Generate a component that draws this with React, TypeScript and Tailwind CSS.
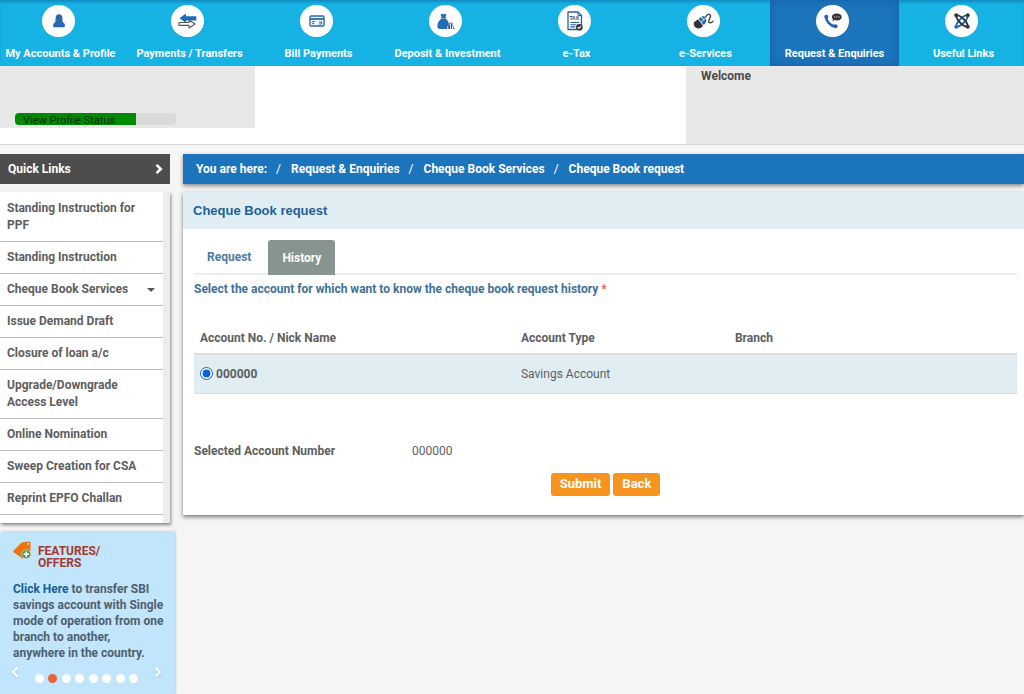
import { useState } from 'react';
import type { ReactNode } from 'react';

interface NavItem {
  label: string;
  icon: ReactNode;
  active?: boolean;
}

function UserIcon() {
  return (
    <svg viewBox="0 0 12 14" className="w-3 h-3.5" fill="#2a67b2">
      <path d="M6 .3c2.200 0 3.400 1.500 3.400 3.600 0 2 .2 3.600.6 4.600l1.100.8c.5.400.7.9.7 1.700v1.400c0 .6-.4.9-1 .9H1.200c-.6 0-1-.3-1-.9V11c0-.8.2-1.300.7-1.700L2 8.500c.4-1 .6-2.600.6-4.600C2.600 1.800 3.800.3 6 .3z" />
    </svg>
  );
}

function TransferIcon() {
  return (
    <svg viewBox="0 0 19 16" className="w-[19px] h-4">
      <path d="M2 9.500h9V7l6 4-6 4v-2.600H1v-2.900z" fill="#fff" stroke="#555" strokeWidth="1.100" strokeLinejoin="round" />
      <path d="M1.500 5.300 8 .4v2.900h10.300v4.300H8v2.500z" fill="#1f6bb5" />
    </svg>
  );
}

function CardIcon() {
  return (
    <svg viewBox="0 0 16 12" className="w-4 h-3" fill="none">
      <rect x="1" y="1" width="14" height="10" rx="1" fill="#eef5fb" stroke="#2d6aa8" strokeWidth="1.400" />
      <path d="M1 4h14" stroke="#2d6aa8" strokeWidth="1.800" />
      <path d="M3 6.600h3M3 8.600h2M10 7h2.500v2H10" stroke="#2d6aa8" />
    </svg>
  );
}

function MoneyBagIcon() {
  return (
    <svg viewBox="0 0 18 17" className="w-[18px] h-[17px]">
      <path d="M3.500 1.500 5 .8 6.300 1.600 7.800.7l1.600.9-1 2.400H4.600z" fill="#1f6bb5" />
      <path d="M3.800 4.700h5.300" stroke="#2b4a6b" />
      <path d="M4.600 5.500h4c1.900 1.500 3.300 3.600 3.300 6.100-.9.500-1.500 1.500-1.500 2.600v1.700H3C1.300 15.900.4 15 .4 13.200c0-3.300 1.700-6 4.200-7.700z" fill="#1f6bb5" />
      <path d="M11.200 11.600h2v4.500h-2zM14 10.600l1.600.6-.6 4.900h-1zM16.200 12.200l1.400 3.900h-1.400z" fill="#3c5674" />
      <path d="M12 11c1-1.300 2.800-1.300 3.800 0" stroke="#1f6bb5" fill="none" />
    </svg>
  );
}

function TaxIcon() {
  return (
    <svg viewBox="0 0 16 20" className="w-4 h-5" fill="none">
      <path d="M1 1h10l3.500 3.500V18.500H1z" stroke="#2d5f9c" strokeWidth="1.300" strokeLinejoin="round" />
      <path d="M11 1v3.500h3.500" stroke="#2d5f9c" />
      <text x="2.400" y="9" fontSize="5" fontWeight="700" fill="#243f66" fontFamily="Liberation Sans, sans-serif">TAX</text>
      <path d="M3.300 11.500h9M3.300 13.700h6M3.300 15.900h5" stroke="#2d5f9c" strokeWidth="1.100" />
      <circle cx="12.300" cy="16.200" r="3.300" fill="#333" />
      <path d="m10.700 16.200 1.200 1.200 2.200-2.400" stroke="#fff" strokeWidth="1.100" />
    </svg>
  );
}

function MouseIcon() {
  return (
    <svg viewBox="0 0 21 17" className="w-[21px] h-[17px]" fill="none">
      <path d="M1 9.200 5 6.200l5 6.600c-1.700 2.700-5 3.600-7.300 1.800C1 13.200.3 11.300 1 9.200z" fill="#333" />
      <path d="m5.700 5.700 2.300-1.800 2.300 3.300-2.500 1.500z" fill="#1f6bb5" />
      <path d="M8.700 3.500c1.800-.7 3.300 0 4.100 1.300l-2 1.800zM8.300 9.500l4.700-3.900c.8 2.100-.1 4.700-2.200 6.500z" fill="#1f6bb5" />
      <path d="M12.500 4.300c1.200-2.700 3-3.600 4.500-2.500 2.400 1.900-2.900 5.700-1 7.500 1.300 1.100 3.100.2 4.300-1.400" stroke="#444" strokeWidth="1.400" />
    </svg>
  );
}

function PhoneIcon() {
  return (
    <svg viewBox="0 0 18 16" className="w-[18px] h-4">
      <path
        d="M2 3.800c.2 4.600 4.300 8.900 9.200 9.700"
        stroke="#1d62b4"
        strokeWidth="2.600"
        fill="none"
      />
      <circle cx="2.300" cy="3.800" r="2" fill="#1d62b4" />
      <circle cx="11.600" cy="13.200" r="2" fill="#1d62b4" />
      <path d="M12.800.4c3 0 4.900 1.400 4.900 3.500s-1.900 3.500-4.900 3.500c-.7 0-1.400-.1-2-.3L8.300 8l.7-1.900c-.7-.6-1.100-1.300-1.100-2.200 0-2.100 1.900-3.500 4.900-3.500z" fill="#333" />
      <path d="M10 3.900h1.200M12.200 3.900h1.200M14.400 3.900h1.200" stroke="#ccc" />
    </svg>
  );
}

function LinksIcon() {
  return (
    <svg viewBox="0 0 16 16" className="w-4 h-4" fill="none">
      <path d="M2.200 13.800C2 11 4 8.500 6.500 6S11 2 13.800 2.200M2.200 13.800c2.800.2 5.300-1.800 7.800-4.300s4-4.500 3.800-7.300" stroke="#1f6bb5" strokeWidth="1.800" />
      <path d="M2.200 2.200C2 5 4 7.500 6.500 10s4.500 4 7.300 3.800M2.200 2.200C5 2 7.500 4 10 6.500s4 4.500 3.800 7.300" stroke="#333" strokeWidth="1.800" />
      <circle cx="2.200" cy="2.200" r="1.900" fill="#333" />
      <circle cx="13.800" cy="13.800" r="1.900" fill="#333" />
      <circle cx="13.800" cy="2.200" r="1.900" fill="#333" />
      <circle cx="2.200" cy="13.800" r="1.900" fill="#1f6bb5" />
    </svg>
  );
}

function TagIcon() {
  return (
    <svg viewBox="0 0 18 18" className="w-[18px] h-[18px] shrink-0">
      <path d="M.6 9.600 8 2.100c.4-.5.900-.7 1.500-.8L16.500.5c.7 0 1 .3 1 .9v8.200c0 .6-.2 1-.6 1.400l-6.100 6c-.6.600-1.300.6-1.900 0L.6 11.200c-.5-.5-.5-1.100 0-1.600z" fill="#ee7410" />
      <circle cx="15.200" cy="2.800" r="1" fill="#ffe0c0" />
      <circle cx="13.300" cy="13.200" r="4.400" fill="#4e9440" stroke="#dff0d8" strokeWidth=".6" />
      <path d="M13.300 10.500v5.400M10.600 13.200H16" stroke="#fff" strokeWidth="1.700" />
    </svg>
  );
}

const navItems: NavItem[] = [
  { label: 'My Accounts & Profile', icon: <UserIcon /> },
  { label: 'Payments / Transfers', icon: <TransferIcon /> },
  { label: 'Bill Payments', icon: <CardIcon /> },
  { label: 'Deposit & Investment', icon: <MoneyBagIcon /> },
  { label: 'e-Tax', icon: <TaxIcon /> },
  { label: 'e-Services', icon: <MouseIcon /> },
  { label: 'Request & Enquiries', icon: <PhoneIcon />, active: true },
  { label: 'Useful Links', icon: <LinksIcon /> },
];

const quickLinks = [
  { label: 'Standing Instruction for PPF' },
  { label: 'Standing Instruction' },
  { label: 'Cheque Book Services', submenu: true },
  { label: 'Issue Demand Draft' },
  { label: 'Closure of loan a/c' },
  { label: 'Upgrade/Downgrade Access Level' },
  { label: 'Online Nomination' },
  { label: 'Sweep Creation for CSA' },
  { label: 'Reprint EPFO Challan' },
];

const breadcrumbs = ['Request & Enquiries', 'Cheque Book Services', 'Cheque Book request'];

function TopNav() {
  return (
    <nav className="overflow-hidden bg-[#16b2e4] shadow-[inset_0_3px_3px_-1px_#1289bd]">
      <ul className="-mx-1 grid grid-cols-8">
        {navItems.map((item) => (
          <li key={item.label}>
            <a
              href="#"
              className={`flex h-[66px] flex-col items-center pt-[5px] text-white ${
                item.active ? 'bg-[#1c74bb] shadow-[inset_0_0_8px_#155fa6]' : ''
              }`}
            >
              <span className="mr-1 flex h-8 w-[33px] items-center justify-center rounded-full bg-white">
                {item.icon}
              </span>
              <span className="mt-[9px] whitespace-nowrap text-[11px] leading-4">{item.label}</span>
            </a>
          </li>
        ))}
      </ul>
    </nav>
  );
}

function ProfileBar() {
  return (
    <div className="flex h-[79px] items-start justify-between border-b border-[#d4d4d4] bg-white">
      <div className="flex h-[62px] w-[255px] items-end bg-[#e8e8e8] px-[15px] pb-[3px]">
        <a
          href="#"
          className="block h-3 w-[161px] rounded bg-[#d9d9d9] text-[11px] font-normal leading-4 text-[#0c2b0c]"
        >
          <span className="block h-full w-3/4 rounded-l bg-[#008a00] pl-2">View Profile Status</span>
        </a>
      </div>
      <div className="h-full w-[33%] bg-[#e8e8e8] px-[15px] pt-0.5 leading-4 text-[#4a4a4a]">Welcome</div>
    </div>
  );
}

function QuickLinks() {
  return (
    <div className="mr-[5px]">
      <button
        type="button"
        className="flex h-[30px] w-full items-center justify-between bg-[#4d4d4d] pl-2 pr-[7px] text-white"
      >
        Quick Links
        <svg viewBox="0 0 8 10" className="h-2.5 w-2" fill="none" stroke="#fff" strokeWidth="2.500">
          <path d="m1.500.8 4.300 4.200-4.300 4.200" />
        </svg>
      </button>
      <div className="mt-2 bg-[#ececec] pr-[7px] shadow-[1px_2px_3px_#888]">
        <ul className="bg-white pb-2 pt-px">
          {quickLinks.map((link) => (
            <li key={link.label} className="border-b border-[#bdbdbd]">
              <a href="#" className="flex items-center justify-between py-[7px] pl-[7px] pr-2 leading-[17px]">
                <span>{link.label}</span>
                {link.submenu && (
                  <svg viewBox="0 0 8 4" className="h-1 w-2 shrink-0" fill="#555">
                    <path d="M0 0h8L4 4z" />
                  </svg>
                )}
              </a>
            </li>
          ))}
        </ul>
      </div>
    </div>
  );
}

function Offers() {
  const [current, setCurrent] = useState(1);

  return (
    <section className="mt-2 flex-1 rounded-t bg-[#c1e5fd] pl-[13px] pr-[11px] pt-2.5 shadow-[1px_0_2px_#ccc]">
      <div className="flex items-start gap-[7px] text-[#a33a2a]">
        <TagIcon />
        <h2 className="mt-1 leading-3">
          FEATURES/
          <br />
          OFFERS
        </h2>
      </div>
      <p className="mt-3 whitespace-nowrap leading-4 text-[#4f5f6c]">
        <a href="#" className="text-[#145f96]">
          Click Here
        </a>{' '}
        to transfer SBI
        <br />
        savings account with Single
        <br />
        mode of operation from one
        <br />
        branch to another,
        <br />
        anywhere in the country.
      </p>
      <div className="-ml-0.5 mr-0.5 mt-[5px] flex items-start">
        <button type="button" aria-label="Previous offer" onClick={() => setCurrent((current + 7) % 8)}>
          <svg viewBox="0 0 8 12" className="h-3 w-2 drop-shadow" fill="none" stroke="#fff" strokeWidth="2">
            <path d="M6.500 1.500 2 6l4.500 4.500" />
          </svg>
        </button>
        <div className="mx-4 mt-2 flex flex-1 justify-between">
          {Array.from({ length: 8 }, (_, i) => (
            <button
              key={i}
              type="button"
              aria-label={`Offer ${i + 1}`}
              onClick={() => setCurrent(i)}
              className={`h-[9px] w-[9px] rounded-full ${i === current ? 'bg-[#e8623c]' : 'bg-white'}`}
            />
          ))}
        </div>
        <button type="button" aria-label="Next offer" onClick={() => setCurrent((current + 1) % 8)}>
          <svg viewBox="0 0 8 12" className="h-3 w-2 drop-shadow" fill="none" stroke="#fff" strokeWidth="2">
            <path d="M1.500 1.500 6 6l-4.500 4.500" />
          </svg>
        </button>
      </div>
    </section>
  );
}

function Breadcrumb() {
  return (
    <nav className="relative flex h-[30px] items-center whitespace-nowrap bg-[#1c75bc] pl-[13px] text-white shadow-[0_2px_4px_#888]">
      You are here:
      {breadcrumbs.map((crumb) => (
        <span key={crumb} className="flex">
          <span className="pl-[9px] pr-2.5 font-normal">/</span>
          <a href="#">{crumb}</a>
        </span>
      ))}
    </nav>
  );
}

function ChequeBookRequest() {
  return (
    <section className="mt-2 bg-white pb-[19px] shadow-[0_2px_4px_#777]">
      <h1 className="bg-[#e0eef3] pl-2.5 font-['Liberation_Sans',Arial,sans-serif] text-[13px] leading-[37px] text-[#215f97]">
        Cheque Book request
      </h1>
      <div className="pl-[11px] pr-[7px] pt-[11px]">
        <div role="tablist" className="flex border-b-2 border-[#ededed] text-[12px]">
          <button type="button" role="tab" aria-selected="false" className="px-[13px] text-[#4b7ba3]">
            Request
          </button>
          <button
            type="button"
            role="tab"
            aria-selected="true"
            className="-mb-0.5 ml-1 h-[35px] rounded-t-[3px] bg-[#879490] px-3.5 text-white"
          >
            History
          </button>
        </div>
        <p className="mt-1.5 leading-[17px] text-[#3f7199]">
          Select the account for which want to know the cheque book request history{' '}
          <span className="text-[#e8604c]">*</span>
        </p>
        <table className="mt-6 w-full table-fixed text-left">
          <thead>
            <tr className="h-8">
              <th className="w-[39%] pl-1.5">Account No. / Nick Name</th>
              <th className="w-[26%] pl-1.5">Account Type</th>
              <th className="pl-1.5">Branch</th>
            </tr>
          </thead>
          <tbody>
            <tr className="h-[39px] border-b border-t-2 border-[#dcdfe0] bg-[#e0edf3]">
              <td className="pl-1.5">
                <label className="flex items-center gap-[3px]">
                  <input type="radio" name="account" defaultChecked className="h-[13px] w-[13px] accent-[#0b63d8]" />
                  000000
                </label>
              </td>
              <td className="pl-1.5 font-normal">Savings Account</td>
              <td />
            </tr>
          </tbody>
        </table>
        <dl className="mt-[49px] flex leading-[17px]">
          <dt className="w-[218px]">Selected Account Number</dt>
          <dd className="font-normal">000000</dd>
        </dl>
        <div className="mt-[13px] flex justify-center gap-[3px] text-[13px] text-white">
          <button type="button" className="h-[23px] rounded-[3px] bg-[#f7941d] px-[9px]">
            Submit
          </button>
          <button type="button" className="h-[23px] rounded-[3px] bg-[#f7941d] px-[9px]">
            Back
          </button>
        </div>
      </div>
    </section>
  );
}

export default function App() {
  return (
    <div className="flex min-h-screen flex-col overflow-hidden bg-[#f5f5f5] font-[Roboto,Arial,sans-serif] text-[12px] font-bold text-[#5e5e5e]">
      <TopNav />
      <ProfileBar />
      <div className="flex flex-1 gap-2 pt-[9px]">
        <aside className="flex w-[175px] shrink-0 flex-col">
          <QuickLinks />
          <Offers />
        </aside>
        <main className="min-w-0 flex-1">
          <Breadcrumb />
          <ChequeBookRequest />
        </main>
      </div>
    </div>
  );
}
